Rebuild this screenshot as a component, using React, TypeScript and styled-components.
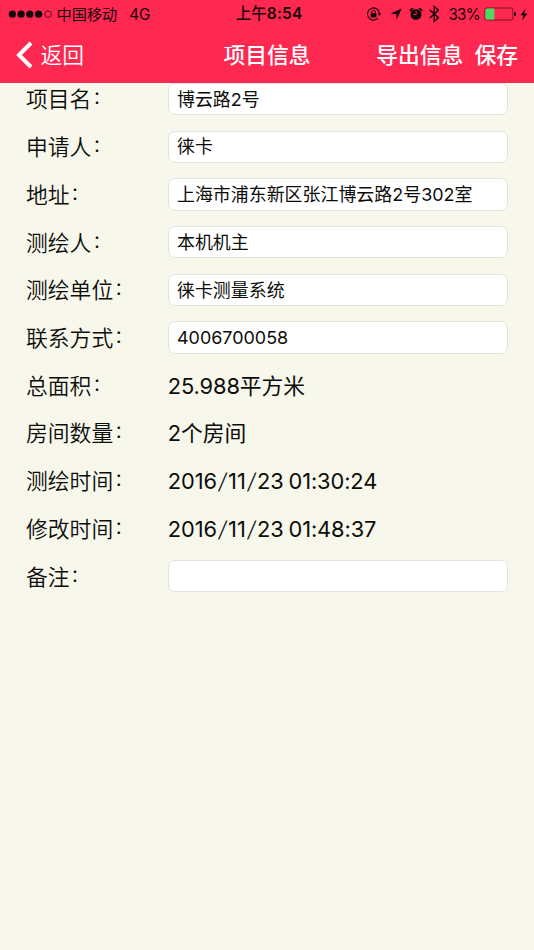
import React from 'react';
import styled, { createGlobalStyle } from 'styled-components';

const GlobalStyle = createGlobalStyle`
  * { box-sizing: border-box; }
  body {
    margin: 0;
    background: #f7f7eb;
    color: #0c0c0a;
    font-family: Inter, "Noto Sans CJK SC", sans-serif;
  }
`;

const Screen = styled.div`
  display: flex;
  flex-direction: column;
  width: 534px;
  height: 950px;
  overflow: hidden;
  background: #f7f7eb;
`;

const Header = styled.header`
  flex: none;
  height: 83px;
  background: #ff2850;
  z-index: 1;
`;

const StatusBar = styled.div`
  display: grid;
  grid-template-columns: 1fr auto 1fr;
  align-items: center;
  height: 28px;
  padding: 0 6px 0 8px;
  color: #16060a;
  font-size: 15.2px;
  line-height: 28px;
  white-space: nowrap;
`;

const StatusGroup = styled.div`
  display: flex;
  align-items: center;
  height: 26px;
`;

const StatusIcons = styled(StatusGroup)`
  justify-content: flex-end;
`;

const Clock = styled.div`
  font-weight: 600;
  font-size: 15.4px;
  letter-spacing: 0.2px;
  transform: translateX(1px);
`;

const Meridiem = styled.span`
  font-weight: 500;
`;

const StatusText = styled.span<{ $left?: number; $right?: number; $tracking?: number }>`
  padding-top: 1px;
  margin-left: ${(p) => p.$left ?? 0}px;
  margin-right: ${(p) => p.$right ?? 0}px;
  letter-spacing: ${(p) => p.$tracking ?? 0}px;
`;

const Glyph = styled.svg<{ $gap?: number }>`
  display: block;
  flex: none;
  margin-right: ${(p) => p.$gap ?? 0}px;
`;

const NavBar = styled.nav`
  display: grid;
  grid-template-columns: 1fr auto 1fr;
  align-items: center;
  height: 54px;
  padding: 0 16px 0 16px;
  color: #fff;
  font-size: 21.8px;
  line-height: 54px;
`;

const NavButton = styled.button<{ $weight?: number }>`
  display: flex;
  align-items: center;
  padding: 0;
  border: 0;
  background: none;
  color: inherit;
  font: inherit;
  font-weight: ${(p) => p.$weight ?? 350};
`;

const Title = styled.h1`
  margin: 0;
  font-size: 21.8px;
  font-weight: 500;
`;

const NavActions = styled.div`
  display: flex;
  justify-content: flex-end;
  gap: 11px;
`;

const Form = styled.main`
  display: flex;
  flex-direction: column;
  gap: 15.4px;
  margin-top: -0.4px;
  padding: 0 26px;
`;

const Row = styled.div`
  display: grid;
  grid-template-columns: 141.5px 1fr;
  align-items: center;
  height: 32.35px;
`;

const Label = styled.div`
  padding-top: 0.7px;
  font-size: 21.8px;
  line-height: 32px;
  font-weight: 350;
`;

const Colon = styled.span`
  display: inline-block;
  margin-left: 1px;
  font-size: 18px;
  line-height: 1;
  transform: translateY(-3px);
`;

const Field = styled.div`
  height: 32.35px;
  padding: 0.9px 8.5px 0;
  border: 1px solid #e3e3dc;
  border-radius: 7px;
  background: #fff;
  font-size: 17.95px;
  font-weight: 390;
  line-height: 30px;
  white-space: nowrap;
`;

const Value = styled.div`
  padding-top: 0.7px;
  padding-left: 0.3px;
  font-size: 21.8px;
  font-weight: 390;
  letter-spacing: -0.1px;
  word-spacing: -1px;
  line-height: 32px;
  white-space: nowrap;
`;

const Slash = styled.span`
  display: inline-block;
  padding: 0 1.9px;
  line-height: 1;
  font-weight: 350;
  transform: skewX(-9deg);
`;

interface Entry {
  label: string;
  value: string;
  editable?: boolean;
}

const entries: Entry[] = [
  { label: '项目名', value: '博云路2号', editable: true },
  { label: '申请人', value: '徕卡', editable: true },
  { label: '地址', value: '上海市浦东新区张江博云路2号302室', editable: true },
  { label: '测绘人', value: '本机机主', editable: true },
  { label: '测绘单位', value: '徕卡测量系统', editable: true },
  { label: '联系方式', value: '4006700058', editable: true },
  { label: '总面积', value: '25.988平方米' },
  { label: '房间数量', value: '2个房间' },
  { label: '测绘时间', value: '2016/11/23 01:30:24' },
  { label: '修改时间', value: '2016/11/23 01:48:37' },
  { label: '备注', value: '', editable: true },
];

const SpacedSlashes = ({ text }: { text: string }) => (
  <>
    {text.split('/').map((part, i) => (
      <React.Fragment key={i}>
        {i > 0 && <Slash>/</Slash>}
        {part}
      </React.Fragment>
    ))}
  </>
);

const SignalDots = () => (
  <Glyph width="45" height="10" viewBox="0 0 45 10">
    {[4.4, 13.1, 21.8, 30.6].map((x) => (
      <circle key={x} cx={x} cy="5.2" r="3.6" fill="#16060a" />
    ))}
    <circle cx="40.1" cy="5.2" r="3.3" fill="none" stroke="#16060a" strokeWidth="0.7" />
  </Glyph>
);

const RotationLock = () => (
  <Glyph width="16" height="16" viewBox="0 0 16 16" $gap={7.5} fill="none" stroke="#16060a">
    <path d="M12.2 12A6.1 6.1 0 1 1 13.6 7" strokeWidth="1.1" />
    <path d="M11.4 7.2h4L13.4 10z" fill="#16060a" stroke="none" />
    <rect x="4.8" y="7.2" width="5.6" height="4.2" fill="#16060a" stroke="none" />
    <path d="M5.9 7.4V6a1.7 1.7 0 0 1 3.4 0v1.4" strokeWidth="1" />
  </Glyph>
);

const LocationArrow = () => (
  <Glyph width="12" height="12" viewBox="0 0 12 12" $gap={7}>
    <path d="M11.7 0.4L6.7 11.4L6.1 6.1L0.6 5.6z" fill="#16060a" />
  </Glyph>
);

const Alarm = () => (
  <Glyph width="14" height="14" viewBox="0 0 14 14" $gap={6.5}>
    <circle cx="7" cy="7.4" r="5.5" fill="#16060a" />
    <path d="M1.4 4.2A2.4 2.4 0 0 1 4.3 1.7M12.6 4.2A2.4 2.4 0 0 0 9.7 1.7" stroke="#16060a" strokeWidth="1.8" fill="none" />
    <path d="M7.2 4v3.6H4.4" stroke="#ff2850" strokeWidth="1" fill="none" />
  </Glyph>
);

const Bluetooth = () => (
  <Glyph width="11" height="18" viewBox="0 0 11 18" $gap={8}>
    <path d="M0.8 5l8.6 7.8-4.2 3.7V1.5l4.2 3.7L0.8 13" stroke="#16060a" strokeWidth="1.4" fill="none" />
  </Glyph>
);

const BatteryMeter = () => (
  <Glyph width="33" height="14" viewBox="0 0 33 14" $gap={3}>
    <rect x="0.9" y="1" width="28" height="12" rx="2" fill="none" stroke="#7d1428" strokeWidth="1" />
    <path d="M3 1.5h7.3v11H3a1.7 1.7 0 0 1-1.7-1.7V3.2A1.7 1.7 0 0 1 3 1.5z" fill="#4cd964" />
    <path d="M30.2 4.8c1.5.3 1.9 1.1 1.9 2.2s-.4 1.9-1.9 2.2z" fill="#16060a" />
  </Glyph>
);

const Bolt = () => (
  <Glyph width="8" height="13" viewBox="0 0 8 13">
    <path d="M5.6 0.6L0.5 7.2h3L2.1 12.4L7.4 5.5H4.2z" fill="#16060a" />
  </Glyph>
);

const BackChevron = () => (
  <Glyph width="17" height="28" viewBox="0 0 17 28" $gap={7.5}>
    <path d="M15 2L3 14l12 12" fill="none" stroke="#fff" strokeWidth="4" />
  </Glyph>
);

export default function App() {
  return (
    <>
      <GlobalStyle />
      <Screen>
        <Header>
          <StatusBar>
            <StatusGroup>
              <SignalDots />
              <StatusText $left={3.5}>中国移动</StatusText>
              <StatusText $left={12}>4G</StatusText>
            </StatusGroup>
            <Clock>
              <Meridiem>上午</Meridiem>8:54
            </Clock>
            <StatusIcons>
              <RotationLock />
              <LocationArrow />
              <Alarm />
              <Bluetooth />
              <StatusText $right={4} $tracking={-0.7}>33%</StatusText>
              <BatteryMeter />
              <Bolt />
            </StatusIcons>
          </StatusBar>
          <NavBar>
            <NavButton>
              <BackChevron />
              返回
            </NavButton>
            <Title>项目信息</Title>
            <NavActions>
              <NavButton $weight={500}>导出信息</NavButton>
              <NavButton $weight={500}>保存</NavButton>
            </NavActions>
          </NavBar>
        </Header>
        <Form>
          {entries.map((e) => (
            <Row key={e.label}>
              <Label>
                {e.label}
                <Colon>：</Colon>
              </Label>
              {e.editable ? (
                <Field>{e.value}</Field>
              ) : (
                <Value>
                  <SpacedSlashes text={e.value} />
                </Value>
              )}
            </Row>
          ))}
        </Form>
      </Screen>
    </>
  );
}
